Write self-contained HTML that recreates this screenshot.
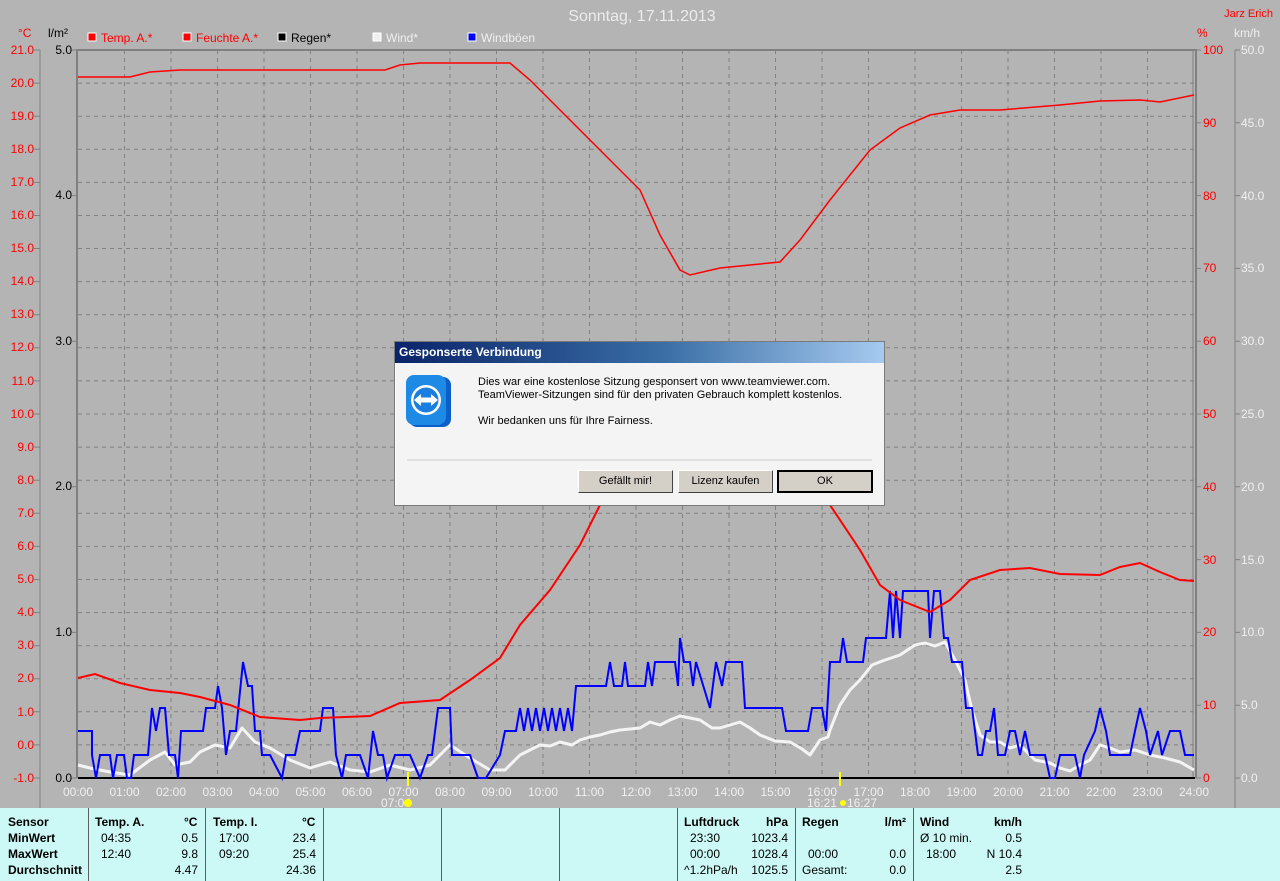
<!DOCTYPE html>
<html><head><meta charset="utf-8"><style>
html,body{margin:0;padding:0}
body{width:1280px;height:881px;background:#b4b4b4;position:relative;overflow:hidden;font-family:"Liberation Sans",sans-serif}
svg{position:absolute;left:0;top:0}
.tbl{position:absolute;left:0;top:808px;width:1280px;height:73px;background:#ccf8f6;font-size:12px;color:#000}
.tbl .d{position:absolute;top:0;width:1px;height:73px;background:#606060}
.tbl span{position:absolute;white-space:nowrap}
.b{font-weight:bold}
.dlg{position:absolute;left:394px;top:341px;width:489px;height:163px;background:#f4f4f4;border:1px solid #7a7a7a;box-shadow:inset 1px 1px 0 #fff;font-size:11px;color:#000}
.tt{height:21px;background:linear-gradient(90deg,#0a246a,#3a6ea5 55%,#a6caf0);color:#fff;font-weight:bold;font-size:12px;line-height:21px;padding-left:4px}
.btn{position:absolute;top:128px;height:23px;background:#d4d0c8;border:1px solid;border-color:#fff #404040 #404040 #fff;box-sizing:border-box;text-align:center;line-height:21px;font-size:11px}
</style></head><body>
<svg width="1280" height="808" viewBox="0 0 1280 808" font-family="Liberation Sans, sans-serif">
<text x="642" y="21" font-size="16" fill="#ececec" text-anchor="middle">Sonntag, 17.11.2013</text>
<text x="1273" y="17" font-size="11" fill="#f00" text-anchor="end">Jarz Erich</text>
<text x="18" y="37" font-size="12" fill="#f00">°C</text>
<text x="48" y="37" font-size="12" fill="#000">l/m²</text>
<text x="1197" y="37" font-size="12" fill="#f00">%</text>
<text x="1234" y="37" font-size="12" fill="#f0f0f0">km/h</text>
<g font-size="12">
<rect x="88" y="33" width="8" height="8" fill="#f00" stroke="#fff"/><text x="101" y="42" fill="#f00">Temp. A.*</text>
<rect x="183" y="33" width="8" height="8" fill="#f00" stroke="#fff"/><text x="196" y="42" fill="#f00">Feuchte A.*</text>
<rect x="278" y="33" width="8" height="8" fill="#000" stroke="#fff"/><text x="291" y="42" fill="#000">Regen*</text>
<rect x="373" y="33" width="8" height="8" fill="#f0f0f0" stroke="#fff"/><text x="386" y="42" fill="#f0f0f0">Wind*</text>
<rect x="468" y="33" width="8" height="8" fill="#00f" stroke="#fff"/><text x="481" y="42" fill="#f0f0f0">Windböen</text>
</g>
<path stroke="#808080" stroke-dasharray="4,4" fill="none" d="M124.5 50V778M171 50V778M217.5 50V778M264 50V778M310.5 50V778M357 50V778M403.5 50V778M450 50V778M496.5 50V778M543 50V778M589.5 50V778M636 50V778M682.5 50V778M729 50V778M775.5 50V778M822 50V778M868.5 50V778M915 50V778M961.5 50V778M1008 50V778M1054.5 50V778M1101 50V778M1147.5 50V778
M78 83.1H1194M78 116.2H1194M78 149.3H1194M78 182.4H1194M78 215.5H1194M78 248.5H1194M78 281.6H1194M78 314.7H1194M78 347.8H1194M78 380.9H1194M78 414H1194M78 447.1H1194M78 480.2H1194M78 513.3H1194M78 546.4H1194M78 579.5H1194M78 612.6H1194M78 645.7H1194M78 678.7H1194M78 711.8H1194M78 744.9H1194"/>
<path stroke="#808080" stroke-width="2" fill="none" d="M77 50H1196V778M77 49V778"/>
<path stroke="#808080" stroke-width="1" fill="none" d="M1193 50V778"/>
<path stroke="#000" stroke-width="2" d="M78 778H1195"/>
<path stroke="#808080" fill="none" d="M40 50V808M34 50H40M34 83.1H40M34 116.2H40M34 149.3H40M34 182.4H40M34 215.5H40M34 248.5H40M34 281.6H40M34 314.7H40M34 347.8H40M34 380.9H40M34 414H40M34 447.1H40M34 480.2H40M34 513.3H40M34 546.4H40M34 579.5H40M34 612.6H40M34 645.7H40M34 678.7H40M34 711.8H40M34 744.9H40M34 778H40
M72 50H77M72 195.6H77M72 341.2H77M72 486.8H77M72 632.4H77M72 778H77
M1196 50H1201M1196 122.8H1201M1196 195.6H1201M1196 268.4H1201M1196 341.2H1201M1196 414H1201M1196 486.8H1201M1196 559.6H1201M1196 632.4H1201M1196 705.2H1201M1196 778H1201
M1235 50V808M1235 50H1240M1235 122.8H1240M1235 195.6H1240M1235 268.4H1240M1235 341.2H1240M1235 414H1240M1235 486.8H1240M1235 559.6H1240M1235 632.4H1240M1235 705.2H1240M1235 778H1240"/>
<g font-size="12" fill="#f00" text-anchor="end">
<text x="34" y="54">21.0</text><text x="34" y="87">20.0</text><text x="34" y="120">19.0</text><text x="34" y="153">18.0</text><text x="34" y="186">17.0</text><text x="34" y="219">16.0</text><text x="34" y="252">15.0</text><text x="34" y="285">14.0</text><text x="34" y="318">13.0</text><text x="34" y="351">12.0</text><text x="34" y="385">11.0</text><text x="34" y="418">10.0</text><text x="34" y="451">9.0</text><text x="34" y="484">8.0</text><text x="34" y="517">7.0</text><text x="34" y="550">6.0</text><text x="34" y="583">5.0</text><text x="34" y="616">4.0</text><text x="34" y="649">3.0</text><text x="34" y="682">2.0</text><text x="34" y="716">1.0</text><text x="34" y="749">0.0</text><text x="34" y="782">-1.0</text>
</g>
<g font-size="12" fill="#000" text-anchor="end">
<text x="72" y="54">5.0</text><text x="72" y="199">4.0</text><text x="72" y="345">3.0</text><text x="72" y="490">2.0</text><text x="72" y="636">1.0</text><text x="72" y="782">0.0</text>
</g>
<g font-size="12" fill="#f00">
<text x="1203" y="54">100</text><text x="1203" y="127">90</text><text x="1203" y="200">80</text><text x="1203" y="272">70</text><text x="1203" y="345">60</text><text x="1203" y="418">50</text><text x="1203" y="491">40</text><text x="1203" y="564">30</text><text x="1203" y="636">20</text><text x="1203" y="709">10</text><text x="1203" y="782">0</text>
</g>
<g font-size="12" fill="#f0f0f0">
<text x="1241" y="54">50.0</text><text x="1241" y="127">45.0</text><text x="1241" y="200">40.0</text><text x="1241" y="272">35.0</text><text x="1241" y="345">30.0</text><text x="1241" y="418">25.0</text><text x="1241" y="491">20.0</text><text x="1241" y="564">15.0</text><text x="1241" y="636">10.0</text><text x="1241" y="709">5.0</text><text x="1241" y="782">0.0</text>
</g>
<g font-size="12" fill="#f0f0f0" text-anchor="middle">
<text x="78" y="796">00:00</text><text x="124.5" y="796">01:00</text><text x="171" y="796">02:00</text><text x="217.5" y="796">03:00</text><text x="264" y="796">04:00</text><text x="310.5" y="796">05:00</text><text x="357" y="796">06:00</text><text x="403.5" y="796">07:00</text><text x="450" y="796">08:00</text><text x="496.5" y="796">09:00</text><text x="543" y="796">10:00</text><text x="589.5" y="796">11:00</text><text x="636" y="796">12:00</text><text x="682.5" y="796">13:00</text><text x="729" y="796">14:00</text><text x="775.5" y="796">15:00</text><text x="822" y="796">16:00</text><text x="868.5" y="796">17:00</text><text x="915" y="796">18:00</text><text x="961.5" y="796">19:00</text><text x="1008" y="796">20:00</text><text x="1054.5" y="796">21:00</text><text x="1101" y="796">22:00</text><text x="1147.5" y="796">23:00</text><text x="1194" y="796">24:00</text>
<text x="396" y="807">07:04</text><text x="822" y="807">16:21</text><text x="862" y="807">16:27</text>
</g>
<path stroke="#ff0" stroke-width="2" d="M408 772V786M840 772V786"/>
<circle cx="408" cy="803" r="4" fill="#ff0"/><circle cx="843" cy="803" r="3" fill="#ff0"/>
<polyline fill="none" stroke="#f4f4f4" stroke-width="3" stroke-linejoin="round" points="78,765 90,768 110,772 130,775 150,760 165,752 175,765 190,762 200,752 215,745 230,748 242,728 255,742 270,748 290,760 310,768 330,762 350,770 370,772 390,765 410,770 430,765 450,745 470,758 490,770 505,770 515,760 520,755 540,745 550,746 560,742 572,745 580,740 590,737 600,735 610,732 620,730 640,728 650,722 660,725 670,720 680,716 690,718 700,720 712,728 720,728 740,722 750,728 760,735 775,741 790,742 802,749 810,755 820,740 828,737 830,730 840,705 850,690 860,680 872,665 885,660 900,655 915,645 925,643 935,646 945,642 955,660 965,680 972,710 980,735 990,742 1000,742 1010,748 1020,745 1035,760 1050,763 1060,768 1070,771 1080,765 1090,760 1100,745 1110,748 1120,752 1135,750 1150,755 1165,758 1180,762 1194,770"/>
<polyline fill="none" stroke="#0000ff" stroke-width="2" points="78,731 92,731 92,755 96,778 100,755 110,755 113,778 117,755 124,755 127,778 131,778 134,755 148,755 152,708 156,731 160,708 165,708 169,755 175,755 178,778 181,731 203,731 206,708 215,708 218,686 222,708 226,755 230,731 236,731 243,662 248,686 252,686 255,731 260,731 262,755 270,755 282,778 286,755 295,755 300,731 320,731 323,708 333,708 336,755 342,778 346,755 360,755 368,778 373,731 378,755 383,755 387,778 395,755 410,755 420,778 428,755 432,755 438,708 450,708 452,755 470,755 478,778 486,778 500,755 505,731 516,731 520,708 524,731 528,708 532,731 536,708 540,731 544,708 548,731 552,708 556,731 560,708 564,731 568,708 572,731 576,686 606,686 610,662 614,686 622,686 625,662 628,686 645,686 648,662 652,686 655,662 675,662 678,686 680,638 684,662 690,662 693,686 696,662 710,708 716,662 722,686 726,662 742,662 745,708 782,708 786,731 808,731 812,708 822,708 826,731 830,662 840,662 843,638 847,662 863,662 866,638 886,638 890,591 893,638 896,591 900,638 903,591 928,591 930,638 934,591 940,591 944,638 948,638 952,662 962,662 966,708 972,708 975,731 978,755 982,755 986,731 990,731 994,708 998,755 1005,755 1010,731 1015,731 1020,755 1025,731 1030,755 1045,755 1050,778 1055,778 1060,755 1075,755 1080,778 1084,755 1095,731 1100,708 1106,731 1110,755 1130,755 1135,731 1140,708 1146,731 1150,755 1158,731 1162,755 1170,731 1180,731 1185,755 1194,755"/>
<polyline fill="none" stroke="#f00" stroke-width="1.5" points="78,77 130,77 150,72 180,70 385,70 400,65 420,63 510,63 530,80 560,110 600,150 640,190 660,235 680,270 690,275 720,268 760,264 780,262 800,240 830,200 870,150 900,128 930,115 960,110 1000,110 1060,105 1100,101 1140,100 1160,102 1194,95"/>
<polyline fill="none" stroke="#f00" stroke-width="2" points="78,678 95,674 120,683 150,690 180,693 200,697 230,705 260,717 300,720 320,718 370,716 400,703 440,700 470,680 500,658 520,625 550,590 580,545 600,505 640,470 700,450 780,455 810,470 830,505 860,550 880,585 900,600 930,612 950,600 970,580 1000,570 1030,568 1060,574 1100,575 1120,567 1140,563 1160,572 1180,580 1194,581"/>
</svg>

<div class="dlg">
<div class="tt">Gesponserte Verbindung</div>
<svg style="left:10px;top:33px" width="48" height="56" viewBox="0 0 48 56">
<rect x="4" y="2" width="42" height="50" rx="8" fill="#0b5fc8"/>
<rect x="1" y="0" width="40" height="50" rx="8" fill="#1e8ae6"/>
<circle cx="21" cy="25" r="15" fill="#fff"/>
<circle cx="21" cy="25" r="12.5" fill="#1a7ee0"/>
<path d="M9 25L16 19V22.5H26V19L33 25L26 31V27.5H16V31Z" fill="#fff"/>
</svg>
<div style="position:absolute;left:83px;top:34px;line-height:13px">Dies war eine kostenlose Sitzung gesponsert von www.teamviewer.com.<br>TeamViewer-Sitzungen sind für den privaten Gebrauch komplett kostenlos.<br><br>Wir bedanken uns für Ihre Fairness.</div>
<div style="position:absolute;left:12px;top:117px;width:465px;height:2px;background:#e0e0e0"></div>
<div class="btn" style="left:183px;width:95px">Gefällt mir!</div>
<div class="btn" style="left:283px;width:95px">Lizenz kaufen</div>
<div class="btn" style="left:382px;width:96px;border:2px solid #000;line-height:19px">OK</div>
</div>

<div class="tbl">
<div class="d" style="left:88px"></div><div class="d" style="left:205px"></div><div class="d" style="left:323px"></div><div class="d" style="left:441px"></div><div class="d" style="left:559px"></div><div class="d" style="left:677px"></div><div class="d" style="left:795px"></div><div class="d" style="left:913px"></div>
<span class="b" style="left:8px;top:7px">Sensor</span>
<span class="b" style="left:8px;top:23px">MinWert</span>
<span class="b" style="left:8px;top:39px">MaxWert</span>
<span class="b" style="left:8px;top:55px">Durchschnitt</span>
<span class="b" style="left:95px;top:7px">Temp. A.</span><span class="b" style="left:184px;top:7px">°C</span>
<span style="left:101px;top:23px">04:35</span><span style="right:1082px;top:23px">0.5</span>
<span style="left:101px;top:39px">12:40</span><span style="right:1082px;top:39px">9.8</span>
<span style="right:1082px;top:55px">4.47</span>
<span class="b" style="left:213px;top:7px">Temp. I.</span><span class="b" style="left:302px;top:7px">°C</span>
<span style="left:219px;top:23px">17:00</span><span style="right:964px;top:23px">23.4</span>
<span style="left:219px;top:39px">09:20</span><span style="right:964px;top:39px">25.4</span>
<span style="right:964px;top:55px">24.36</span>
<span class="b" style="left:684px;top:7px">Luftdruck</span><span class="b" style="right:492px;top:7px">hPa</span>
<span style="left:690px;top:23px">23:30</span><span style="right:492px;top:23px">1023.4</span>
<span style="left:690px;top:39px">00:00</span><span style="right:492px;top:39px">1028.4</span>
<span style="left:684px;top:55px">^1.2hPa/h</span><span style="right:492px;top:55px">1025.5</span>
<span class="b" style="left:802px;top:7px">Regen</span><span class="b" style="right:374px;top:7px">l/m²</span>
<span style="left:808px;top:39px">00:00</span><span style="right:374px;top:39px">0.0</span>
<span style="left:802px;top:55px">Gesamt:</span><span style="right:374px;top:55px">0.0</span>
<span class="b" style="left:920px;top:7px">Wind</span><span class="b" style="right:258px;top:7px">km/h</span>
<span style="left:920px;top:23px">Ø 10 min.</span><span style="right:258px;top:23px">0.5</span>
<span style="left:926px;top:39px">18:00</span><span style="right:258px;top:39px">N 10.4</span>
<span style="right:258px;top:55px">2.5</span>
</div>
</body></html>
